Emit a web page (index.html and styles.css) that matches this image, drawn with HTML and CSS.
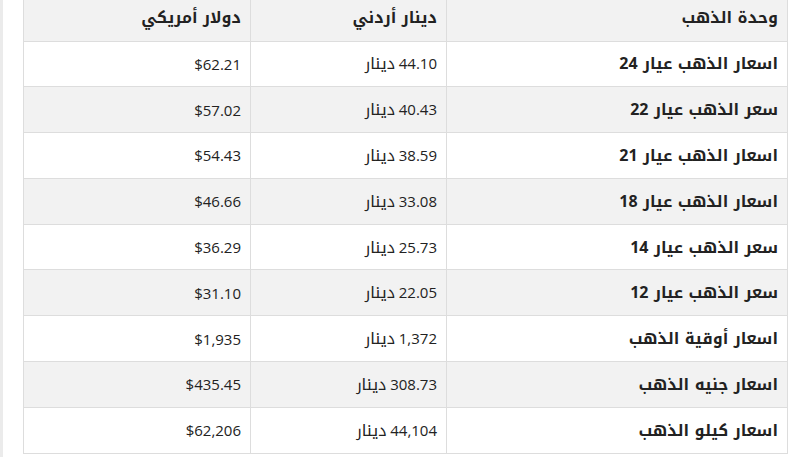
FILE: index.html
```html
<!DOCTYPE html>
<html lang="ar">
<head>
<meta charset="utf-8">
<link rel="stylesheet" href="styles.css">
</head>
<body>
<div class="page">
  <div class="strip"></div>
  <div class="content">
    <table class="prices" dir="rtl">
      <colgroup>
        <col class="c1"><col class="c2"><col class="c3">
      </colgroup>
      <thead>
        <tr><th><span class="ar">وحدة الذهب</span></th><th><span class="ar">دينار أردني</span></th><th><span class="ar">دولار أمريكي</span></th></tr>
      </thead>
      <tbody>
        <tr><td class="name"><span class="ar">اسعار الذهب عيار 24</span></td><td>44.10 <span class="ar">دينار</span></td><td>$62.21</td></tr>
        <tr><td class="name"><span class="ar">سعر الذهب عيار 22</span></td><td>40.43 <span class="ar">دينار</span></td><td>$57.02</td></tr>
        <tr><td class="name"><span class="ar">اسعار الذهب عيار 21</span></td><td>38.59 <span class="ar">دينار</span></td><td>$54.43</td></tr>
        <tr><td class="name"><span class="ar">اسعار الذهب عيار 18</span></td><td>33.08 <span class="ar">دينار</span></td><td>$46.66</td></tr>
        <tr><td class="name"><span class="ar">سعر الذهب عيار 14</span></td><td>25.73 <span class="ar">دينار</span></td><td>$36.29</td></tr>
        <tr><td class="name"><span class="ar">سعر الذهب عيار 12</span></td><td>22.05 <span class="ar">دينار</span></td><td>$31.10</td></tr>
        <tr><td class="name"><span class="ar">اسعار أوقية الذهب</span></td><td>1,372 <span class="ar">دينار</span></td><td>$1,935</td></tr>
        <tr><td class="name"><span class="ar">اسعار جنيه الذهب</span></td><td>308.73 <span class="ar">دينار</span></td><td>$435.45</td></tr>
        <tr><td class="name"><span class="ar">اسعار كيلو الذهب</span></td><td>44,104 <span class="ar">دينار</span></td><td>$62,206</td></tr>
      </tbody>
    </table>
  </div>
</div>
</body>
</html>
```
FILE: styles.css
```css
html, body {
  margin: 0;
  padding: 0;
  background: #ffffff;
}
.page {
  display: flex;
  width: 804px;
  height: 457px;
  overflow: hidden;
}
.strip {
  width: 3px;
  flex: none;
  background: #ebebeb;
}
.content {
  padding-left: 20px;
}
.prices {
  margin-top: -5px;
  width: 764px;
  border-collapse: collapse;
  table-layout: fixed;
  font-family: "Open Sans", "Noto Kufi Arabic", "DejaVu Sans", sans-serif;
  font-size: 15px;
  line-height: 20px;
  color: #222222;
}
.ar {
  font-family: "Noto Kufi Arabic", "DejaVu Sans", sans-serif;
  font-size: 16px;
}
.c1 { width: 341px; }
.c2 { width: 196px; }
.c3 { width: 227px; }
.prices th, .prices td {
  height: 46px;
  padding: 0 9px;
  text-align: right;
  vertical-align: middle;
  border: 1px solid #dddddd;
  box-sizing: border-box;
}
.prices tbody td {
  height: 45.8px;
}
.prices thead th {
  border-top: none;
  background: #f2f2f2;
  font-weight: 700;
}
.prices tbody tr:nth-child(even) td {
  background: #f2f2f2;
}
.prices td.name {
  font-weight: 700;
}
```
